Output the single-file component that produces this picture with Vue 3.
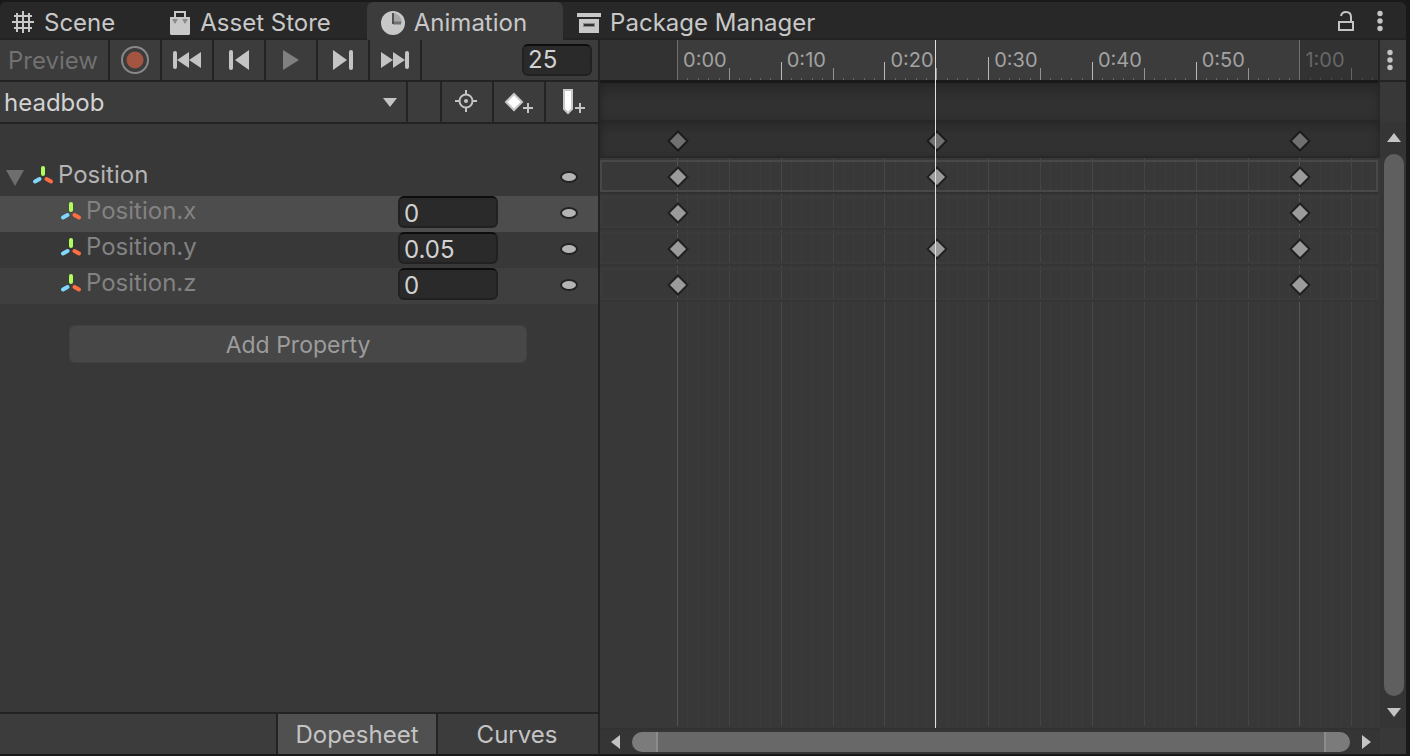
<script setup>
import { ref } from 'vue'

const clip = ref('headbob')
const frame = ref('25')

const LAST_FRAME = 60
const ORIGIN = 9.9
const STEP = 1.3333
const at = (f) => ({ left: `${ORIGIN + f * STEP}%` })

const ticks = Array.from({ length: 68 }, (_, f) => {
  let kind = 'minor'
  if (f === 0 || f === LAST_FRAME) kind = 'edge'
  else if (f === 30) kind = 'half'
  else if (f % 10 === 0) kind = 'major'
  else if (f % 5 === 0) kind = 'mid'
  return { f, kind, out: f > LAST_FRAME }
})

const labels = [
  { f: 0, text: '0:00' },
  { f: 10, text: '0:10' },
  { f: 20, text: '0:20' },
  { f: 30, text: '0:30' },
  { f: 40, text: '0:40' },
  { f: 50, text: '0:50' },
  { f: 60, text: '1:00', out: true }
]

const range = { left: `${ORIGIN}%`, width: `${LAST_FRAME * STEP}%` }
const playhead = at(24.9)

const properties = ref([
  { name: 'Position.x', value: '0', tone: 'selected' },
  { name: 'Position.y', value: '0.05', tone: '' },
  { name: 'Position.z', value: '0', tone: 'alt' }
])

const lanes = [
  { name: 'Position', keys: [0, 25, 60], selected: true },
  { name: 'Position.x', keys: [0, 60] },
  { name: 'Position.y', keys: [0, 25, 60] },
  { name: 'Position.z', keys: [0, 60] }
]
</script>

<template>
  <div class="window">
    <nav class="tabs" aria-label="Panels">
      <button class="tab first" type="button">
        <svg width="24" height="24" viewBox="0 0 24 24" fill="none" stroke="currentColor" stroke-width="2">
          <path d="M6 2v19M12 0v22M18 2v19M3 5h18M1 11h22M3 17h18" />
        </svg>
        <span>Scene</span>
      </button>
      <button class="tab" type="button">
        <svg width="24" height="24" viewBox="0 0 24 24">
          <path d="M8 7V1h10v6" fill="none" stroke="currentColor" stroke-width="2" />
          <path d="M3 6h20v17l-1 1H4l-1-1z" fill="currentColor" />
          <path d="M5 8h6l-3 5zM15 8h6l-3 5z" fill="#8a8a8a" />
        </svg>
        <span>Asset Store</span>
      </button>
      <button class="tab active" type="button" aria-current="page">
        <svg width="24" height="24" viewBox="0 0 24 24">
          <circle cx="12" cy="12" r="12" fill="currentColor" />
          <path d="M12 2v10h9A9 10 0 0 0 12 2z" fill="#a6a6a6" />
          <path d="M12 12h8" stroke="#707070" stroke-width="3" />
          <path d="M12 2v11" stroke="#505050" stroke-width="2" />
        </svg>
        <span>Animation</span>
      </button>
      <button class="tab" type="button">
        <svg width="24" height="24" viewBox="0 0 24 24">
          <path d="M0 2h24v4H0zM2 8h20v14H2z" fill="currentColor" />
          <path d="M6 14h12" stroke="#8c8c8c" stroke-width="4" />
          <path d="M7 14h10" stroke="#333" stroke-width="2" />
        </svg>
        <span>Package Manager</span>
      </button>
      <div class="window-tools">
        <button type="button" aria-label="Lock">
          <svg width="20" height="24" viewBox="0 0 20 24" fill="none" stroke="currentColor" stroke-width="2">
            <rect x="3" y="12" width="14" height="8" />
            <path d="M5 6A5 5 0 0 1 10 2Q15 2 15 7v5" />
          </svg>
        </button>
        <button type="button" aria-label="Window menu">
          <svg width="6" height="24" viewBox="0 0 6 24" fill="currentColor">
            <circle cx="3" cy="3.500" r="2.700" /><circle cx="3" cy="11" r="2.700" /><circle cx="3" cy="18.500" r="2.700" />
          </svg>
        </button>
      </div>
    </nav>

    <main class="panels">
      <section class="side">
        <div class="bar">
          <button class="cell preview" type="button">Preview</button>
          <button class="cell" type="button" aria-label="Record">
            <svg width="28" height="28" viewBox="0 0 28 28">
              <circle cx="14" cy="14" r="13" fill="none" stroke="#888" stroke-width="2" />
              <circle cx="14" cy="14" r="8.500" fill="#a45541" />
            </svg>
          </button>
          <button class="cell" type="button" aria-label="First frame">
            <svg width="28" height="18" viewBox="0 0 28 18" fill="currentColor">
              <rect width="4" height="18" rx="2" /><path d="M16 1v16L4 9zM28 1v16L16 9z" />
            </svg>
          </button>
          <button class="cell" type="button" aria-label="Previous key">
            <svg width="20" height="20" viewBox="0 0 20 20" fill="currentColor">
              <rect width="4" height="20" rx="2" /><path d="M20 0v20L6 10z" />
            </svg>
          </button>
          <button class="cell" type="button" aria-label="Play">
            <svg width="16" height="20" viewBox="0 0 16 20" fill="#808080"><path d="M0 0l16 10L0 20z" /></svg>
          </button>
          <button class="cell" type="button" aria-label="Next key">
            <svg width="20" height="20" viewBox="0 0 20 20" fill="currentColor">
              <rect x="16" width="4" height="20" rx="2" /><path d="M0 0v20L14 10z" />
            </svg>
          </button>
          <button class="cell" type="button" aria-label="Last frame">
            <svg width="28" height="18" viewBox="0 0 28 18" fill="currentColor">
              <rect x="24" width="4" height="18" rx="2" /><path d="M0 1v16L12 9zM12 1v16L24 9z" />
            </svg>
          </button>
          <input v-model="frame" class="field frame" type="text" aria-label="Current frame" />
        </div>

        <div class="bar">
          <div class="clip">
            <select v-model="clip" aria-label="Animation clip">
              <option value="headbob">headbob</option>
            </select>
            <svg class="caret" width="14" height="9" viewBox="0 0 14 9" fill="currentColor"><path d="M0 0h14L7 9z" /></svg>
          </div>
          <div class="spacer"></div>
          <button class="cell" type="button" aria-label="Filter by selection">
            <svg width="24" height="24" viewBox="0 0 24 24" fill="none" stroke="currentColor" stroke-width="2">
              <circle cx="11" cy="11" r="6.500" /><path d="M11 0v5M11 17v5M0 11h5M17 11h5" />
              <circle cx="11" cy="11" r="2" fill="currentColor" stroke="none" />
            </svg>
          </button>
          <button class="cell" type="button" aria-label="Add keyframe">
            <svg width="30" height="26" viewBox="0 0 30 26">
              <path d="M10 5l8 8-8 8-8-8z" fill="#fff" stroke="#c8c8c8" stroke-width="2" />
              <path d="M24 14v10M19 19h10" stroke="currentColor" stroke-width="2" />
            </svg>
          </button>
          <button class="cell last" type="button" aria-label="Add event">
            <svg width="30" height="26" viewBox="0 0 30 26">
              <path d="M7 1h8v19l-4 4-4-4z" fill="#fff" stroke="#c8c8c8" stroke-width="2" />
              <path d="M23 14v10M18 19h10" stroke="currentColor" stroke-width="2" />
            </svg>
          </button>
        </div>

        <div class="tree">
          <div class="prop parent">
            <button class="fold" type="button" aria-label="Collapse Position">
              <svg width="18" height="16" viewBox="0 0 18 16" fill="#6e6e6e"><path d="M0 0h18L9 16z" /></svg>
            </button>
            <svg class="axes" width="22" height="22" viewBox="0 0 22 22" fill="none" stroke-width="4" stroke-linecap="round">
              <path d="M11 3v6" stroke="#b1fd59" /><path d="M14.500 14l4.500 2.500" stroke="#ff6e40" /><path d="M7.500 14l-4.500 2.500" stroke="#80d8ff" />
            </svg>
            <span class="name">Position</span>
            <button class="dot" type="button" aria-label="Position options"></button>
          </div>
          <div v-for="p in properties" :key="p.name" class="prop child" :class="p.tone">
            <svg class="axes" width="22" height="22" viewBox="0 0 22 22" fill="none" stroke-width="4" stroke-linecap="round">
              <path d="M11 3v6" stroke="#b1fd59" /><path d="M14.500 14l4.500 2.500" stroke="#ff6e40" /><path d="M7.500 14l-4.500 2.500" stroke="#80d8ff" />
            </svg>
            <label class="name" :for="p.name">{{ p.name }}</label>
            <input :id="p.name" v-model="p.value" class="field value" type="text" />
            <button class="dot" type="button" :aria-label="`${p.name} options`"></button>
          </div>
          <button class="add" type="button">Add Property</button>
        </div>

        <div class="modes">
          <button class="mode dope" type="button" aria-pressed="true">Dopesheet</button>
          <button class="mode curves" type="button" aria-pressed="false">Curves</button>
        </div>
      </section>

      <section class="timeline" aria-label="Timeline">
        <div class="ruler">
          <div class="range" :style="range"></div>
          <i v-for="t in ticks" :key="t.f" class="tick" :class="[t.kind, { out: t.out }]" :style="at(t.f)"></i>
          <span v-for="l in labels" :key="l.f" class="time" :class="{ out: l.out }" :style="at(l.f)">{{ l.text }}</span>
        </div>
        <div class="events"></div>
        <div class="summary">
          <div class="track">
            <svg v-for="k in [0, 25, 60]" :key="k" class="key" :style="at(k)" width="22" height="22" viewBox="0 0 22 22">
              <path d="M11 1.500l9.500 9.500-9.500 9.500L1.500 11z" fill="#707070" stroke="#1b1b1b" stroke-width="2" />
            </svg>
          </div>
        </div>
        <div class="sheet">
          <i v-for="t in ticks" :key="t.f" class="line" :class="t.kind" :style="at(t.f)"></i>
          <div v-for="lane in lanes" :key="lane.name" class="lane" :class="{ selected: lane.selected }">
            <svg v-for="k in lane.keys" :key="k" class="key" :style="at(k)" width="22" height="22" viewBox="0 0 22 22">
              <path d="M11 1.500l9.500 9.500-9.500 9.500L1.500 11z" fill="#9b9b9b" stroke="#202020" stroke-width="2" />
            </svg>
          </div>
        </div>
        <div class="overlay">
          <div class="playhead" :style="playhead"></div>
        </div>
        <div class="hscroll">
          <button type="button" aria-label="Scroll left">
            <svg width="9" height="14" viewBox="0 0 9 14" fill="currentColor"><path d="M9 0v14L0 7z" /></svg>
          </button>
          <div class="hthumb"></div>
          <button type="button" aria-label="Scroll right">
            <svg width="9" height="14" viewBox="0 0 9 14" fill="currentColor"><path d="M0 0v14l9-7z" /></svg>
          </button>
        </div>
      </section>

      <aside class="edge">
        <button class="options" type="button" aria-label="Timeline options">
          <svg width="6" height="24" viewBox="0 0 6 24" fill="currentColor">
            <circle cx="3" cy="4.500" r="2.700" /><circle cx="3" cy="12" r="2.700" /><circle cx="3" cy="19.500" r="2.700" />
          </svg>
        </button>
        <div class="gap"></div>
        <div class="vscroll">
          <button type="button" aria-label="Scroll up">
            <svg width="14" height="9" viewBox="0 0 14 9" fill="currentColor"><path d="M0 9h14L7 0z" /></svg>
          </button>
          <div class="vthumb"></div>
          <button type="button" aria-label="Scroll down">
            <svg width="14" height="9" viewBox="0 0 14 9" fill="currentColor"><path d="M0 0h14L7 9z" /></svg>
          </button>
        </div>
      </aside>
    </main>
  </div>
</template>

<style>
body {
  margin: 0;
  background: #191919;
}
</style>

<style scoped>
.window {
  box-sizing: border-box;
  min-height: 100vh;
  padding: 2px 4px 2px 0;
  display: flex;
  flex-direction: column;
  background: #191919;
  color: #c4c4c4;
  font: 400 24px/32px Inter, "Liberation Sans", sans-serif;
}
.window * { box-sizing: border-box; }
button, input, select {
  margin: 0;
  padding: 0;
  border: 0;
  background: none;
  color: inherit;
  font: inherit;
}
button {
  display: flex;
  align-items: center;
  justify-content: center;
}
svg { display: block; flex: none; }

.tabs {
  display: flex;
  height: 38px;
  background: linear-gradient(#282828 36px, #232323 36px);
  border-radius: 6px 6px 0 0;
}
.tab {
  gap: 9px;
  padding: 3px 36px 0 14px;
  border-radius: 6px 6px 0 0;
  color: #c8c8c8;
  white-space: nowrap;
}
.tab.first { padding-left: 11px; padding-right: 38px; }
.tab.active { background: #3c3c3c; }
.window-tools {
  display: flex;
  gap: 21px;
  margin-left: auto;
  padding-right: 23px;
}
.window-tools button { padding-top: 2px; }

.panels {
  flex: 1;
  display: grid;
  grid-template-columns: minmax(0, 600fr) minmax(0, 780fr) 26px;
}

.side {
  display: flex;
  flex-direction: column;
  background: #383838;
  border-right: 2px solid #232323;
}
.bar {
  display: flex;
  height: 42px;
  background: #3c3c3c;
  border-bottom: 2px solid #232323;
}
.cell {
  flex: 0 0 52px;
  border-right: 2px solid #232323;
}
.cell.preview {
  flex-basis: 110px;
  padding: 2px 2px 0 0;
  color: #717171;
}
.cell.last { border-right: 0; }
.field {
  height: 32px;
  padding-left: 4px;
  border: 2px solid #212121;
  border-top-color: #0d0d0d;
  border-radius: 6px;
  background: #2a2a2a;
  color: #d2d2d2;
}
.field.frame {
  width: 70px;
  margin: 4px 6px 0 auto;
}
.clip {
  position: relative;
  flex: 1;
  border-right: 2px solid #232323;
}
.clip select {
  width: 100%;
  height: 40px;
  padding: 2px 0 0 4px;
  appearance: none;
  color: #d2d2d2;
}
.caret {
  position: absolute;
  right: 9px;
  top: 16px;
  pointer-events: none;
}
.spacer {
  flex: 0 0 34px;
  border-right: 2px solid #232323;
}

.tree {
  flex: 1;
  display: flex;
  flex-direction: column;
  padding-top: 36px;
}
.prop {
  display: flex;
  align-items: center;
  height: 36px;
  padding: 0 20px 4px 60px;
  color: #828282;
}
.prop.parent { padding-left: 6px; color: #b4b4b4; }
.prop.selected { background: #4d4d4d; }
.prop.alt { background: #3f3f3f; }
.fold { margin-right: 8px; padding-top: 4px; }
.name {
  flex: 1;
  padding: 0 0 3px 4px;
}
.value { width: 100px; margin-right: 62px; padding-top: 3px; }
.dot {
  width: 18px;
  height: 12px;
  margin-top: 2px;
  border: 2px solid #232323;
  border-radius: 50%;
  background: #b4b4b4;
}
.add {
  align-self: center;
  width: 458px;
  height: 38px;
  margin: 21px 2px 0 0;
  padding-top: 2px;
  border-radius: 6px;
  background: #474747;
  border: 1px solid #414141;
  color: #9c9c9c;
  font-size: 23px;
}
.modes {
  display: flex;
  justify-content: flex-end;
  height: 42px;
  border-top: 2px solid #232323;
  background: #3c3c3c;
}
.mode { padding-top: 2px; border-left: 2px solid #232323; }
.dope { width: 160px; background: #505050; }
.curves { width: 162px; padding-right: 2px; }

.timeline {
  position: relative;
  display: flex;
  flex-direction: column;
  background: #383838;
}
.ruler, .sheet { margin-right: 2px; }
.ruler {
  position: relative;
  height: 43px;
  background: #323232;
  border-bottom: 3px solid #191919;
  box-shadow: 2px 0 #232323;
}
.range {
  position: absolute;
  top: 0;
  bottom: 0;
  background: #3c3c3c;
}
.tick {
  position: absolute;
  bottom: 0;
  width: 1px;
  height: 2px;
  background: #676767;
}
.tick.edge { height: 40px; background: #6f6f6f; }
.tick.major { height: 18px; background: #bababa; }
.tick.half { height: 23px; background: #bababa; }
.tick.mid { height: 12px; background: #939393; }
.tick.out { background: #4a4a4a; }
.tick.mid.out { background: #656565; }
.time {
  position: absolute;
  top: 4px;
  padding-left: 6px;
  font-size: 20px;
  color: #a2a2a2;
}
.time.out { color: #676767; }
.events, .summary {
  background: linear-gradient(#292929, #313131 16px);
  box-shadow: inset 4px 0 6px -4px #222, inset -6px 0 8px -6px #222;
}
.events { height: 37px; }
.summary {
  height: 38px;
  padding-right: 2px;
  border-bottom: 2px solid #282828;
}
.track {
  position: relative;
  height: 36px;
}
.key {
  position: absolute;
  top: 10px;
  margin-left: -10px;
}
.sheet {
  position: relative;
  flex: 1;
  margin-bottom: 2px;
}
.line {
  position: absolute;
  top: 0;
  bottom: 0;
  width: 1px;
  background: #3c3c3c;
}
.line.mid { background: #444; }
.line.major, .line.half { background: #484848; }
.line.edge { background: #545454; }
.lane {
  position: relative;
  height: 32px;
  margin: 2px 0 4px;
  box-shadow: inset 0 0 0 2px #3b3b3b, 0 2px #353535;
}
.lane.selected { box-shadow: inset 0 0 0 2px #484848, 0 2px #303030; }
.lane .key { top: 6px; }
.overlay {
  position: absolute;
  top: 0;
  right: 2px;
  bottom: 26px;
  left: 0;
  pointer-events: none;
}
.playhead {
  position: absolute;
  top: 0;
  bottom: 0;
  width: 1px;
  background: #e0e0e0;
}
.hscroll {
  display: flex;
  align-items: center;
  height: 26px;
  padding: 0 9px 0 11px;
  border-top: 2px solid #323232;
  background: #353535;
}
.hthumb {
  flex: 1;
  height: 20px;
  margin: 0 12px;
  border-radius: 10px;
  background: linear-gradient(90deg, #7b7b7b 24px, #8c8c8c 24px, #8c8c8c 26px, #686868 26px,
    #686868 calc(100% - 26px), #8c8c8c calc(100% - 26px), #8c8c8c calc(100% - 24px), #7b7b7b calc(100% - 24px));
}

.edge {
  display: flex;
  flex-direction: column;
  background: #383838;
}
.options {
  height: 42px;
  padding-right: 6px;
  background: #3c3c3c;
  border-bottom: 2px solid #232323;
}
.gap { height: 40px; }
.vscroll {
  flex: 1;
  display: flex;
  flex-direction: column;
  align-items: center;
  margin-bottom: 26px;
  padding: 11px 0 11px 2px;
  background: #353535;
}
.vthumb {
  flex: 1;
  width: 20px;
  margin: 12px 0;
  border-radius: 10px;
  background: #5f5f5f;
}
</style>
